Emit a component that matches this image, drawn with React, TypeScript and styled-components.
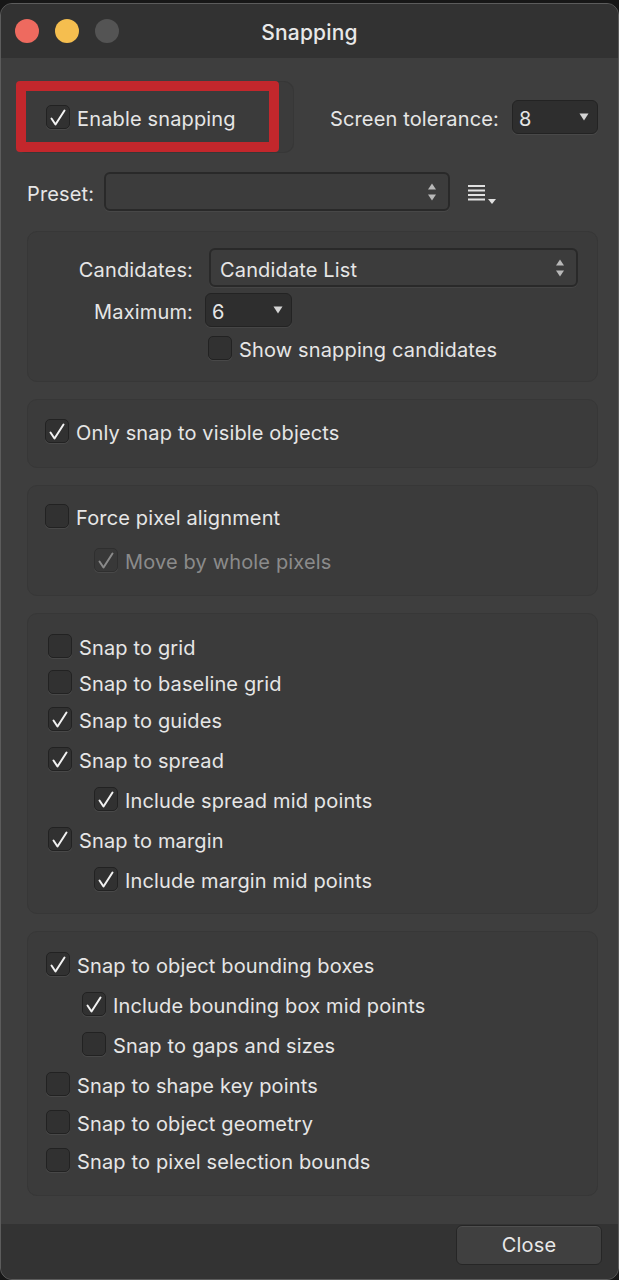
import React from 'react';
import styled, { createGlobalStyle } from 'styled-components';

const GlobalStyle = createGlobalStyle`
  html, body {
    margin: 0;
    padding: 0;
    background: #171717;
  }
  body {
    font-family: Inter, "Noto Sans", "Liberation Sans", sans-serif;
    -webkit-font-smoothing: antialiased;
  }
  * {
    box-sizing: border-box;
  }
`;

type Option = {
  label: string;
  checked?: boolean;
  sub?: boolean;
  space?: number;
};

const spreadOptions: Option[] = [
  { label: 'Snap to grid' },
  { label: 'Snap to baseline grid', space: 10 },
  { label: 'Snap to guides', checked: true, space: 11 },
  { label: 'Snap to spread', checked: true, space: 14 },
  { label: 'Include spread mid points', checked: true, sub: true, space: 14 },
  { label: 'Snap to margin', checked: true, space: 14 },
  { label: 'Include margin mid points', checked: true, sub: true, space: 14 },
];

const objectOptions: Option[] = [
  { label: 'Snap to object bounding boxes', checked: true },
  { label: 'Include bounding box mid points', checked: true, sub: true, space: 14 },
  { label: 'Snap to gaps and sizes', sub: true, space: 14 },
  { label: 'Snap to shape key points', space: 14 },
  { label: 'Snap to object geometry', space: 12 },
  { label: 'Snap to pixel selection bounds', space: 12 },
];

const Checkbox = ({ checked, disabled }: { checked?: boolean; disabled?: boolean }) => (
  <Box $disabled={disabled}>
    {checked && (
      <svg width="22" height="22" viewBox="0 0 22 22">
        <polyline
          points="4.5,12.5 8.5,18.5 17.5,4.5"
          fill="none"
          stroke={disabled ? '#8a8a8a' : '#f2f2f2'}
          strokeWidth="2"
          strokeLinecap="round"
          strokeLinejoin="round"
        />
      </svg>
    )}
  </Box>
);

const StepArrows = () => (
  <svg width="10" height="24" viewBox="0 0 10 24">
    <polygon points="1,9.5 5,3.5 9,9.5" fill="#b8b8b8" />
    <polygon points="1,14.5 5,20.5 9,14.5" fill="#b8b8b8" />
  </svg>
);

const DropArrow = () => (
  <svg width="10" height="8" viewBox="0 0 10 8">
    <polygon points="0.5,0.5 9.5,0.5 5,7.5" fill="#d4d4d4" />
  </svg>
);

const ListMenuIcon = () => (
  <svg width="30" height="24" viewBox="0 0 30 24">
    <rect x="0" y="5" width="17" height="2" fill="#e0e0e0" />
    <rect x="0" y="9.5" width="17" height="2" fill="#e0e0e0" />
    <rect x="0" y="14" width="17" height="2" fill="#e0e0e0" />
    <rect x="0" y="18.5" width="17" height="2" fill="#e0e0e0" />
    <polygon points="20,19 28,19 24,24" fill="#e0e0e0" />
  </svg>
);

const OptionList = ({ options, indent }: { options: Option[]; indent: number }) => (
  <>
    {options.map((o) => (
      <OptionRow key={o.label} $indent={o.sub ? indent : 0} $space={o.space}>
        <Checkbox checked={o.checked} />
        <Label>{o.label}</Label>
      </OptionRow>
    ))}
  </>
);

const App = () => {
  return (
    <>
      <GlobalStyle />
      <Window>
        <TitleBar>
          <Lights>
            <Light $color="#ee6a5f" />
            <Light $color="#f5be4f" />
            <Light $color="#545454" />
          </Lights>
          <Title>Snapping</Title>
          <span />
        </TitleBar>

        <Content>
          <TopRow>
            <EnablePanel>
              <Highlight>
                <OptionRow>
                  <Checkbox checked />
                  <Label>Enable snapping</Label>
                </OptionRow>
              </Highlight>
            </EnablePanel>
            <Tolerance>
              <Label>Screen tolerance:</Label>
              <Dropdown $width={86} $height={34}>
                <Label>8</Label>
                <DropArrow />
              </Dropdown>
            </Tolerance>
          </TopRow>

          <PresetRow>
            <PresetLabel>Preset:</PresetLabel>
            <PopupField $width={346}>
              <Label />
              <StepArrows />
            </PopupField>
            <MenuButton>
              <ListMenuIcon />
            </MenuButton>
          </PresetRow>

          <PanelStack>
            <Panel $pad="16px 0 20px 0">
              <FieldRow>
                <FieldLabel>Candidates:</FieldLabel>
                <PopupField $width={369} $gap={16}>
                  <Label>Candidate List</Label>
                  <StepArrows />
                </PopupField>
              </FieldRow>
              <FieldRow $space={6}>
                <FieldLabel>Maximum:</FieldLabel>
                <Dropdown $width={87} $height={34} $gap={12}>
                  <Label>6</Label>
                  <DropArrow />
                </Dropdown>
              </FieldRow>
              <OptionRow $indent={180} $space={8}>
                <Checkbox />
                <Label>Show snapping candidates</Label>
              </OptionRow>
            </Panel>

            <Panel $pad="18px 0 23px 17px">
              <OptionRow>
                <Checkbox checked />
                <Label>Only snap to visible objects</Label>
              </OptionRow>
            </Panel>

            <Panel $pad="17px 0 22px 17px">
              <OptionRow>
                <Checkbox />
                <Label>Force pixel alignment</Label>
              </OptionRow>
              <OptionRow $indent={49} $space={18}>
                <Checkbox checked disabled />
                <Label $dim>Move by whole pixels</Label>
              </OptionRow>
            </Panel>

            <Panel $pad="19px 0 21px 20px">
              <OptionList options={spreadOptions} indent={46} />
            </Panel>

            <Panel $pad="19px 0 22px 18px">
              <OptionList options={objectOptions} indent={36} />
            </Panel>
          </PanelStack>
        </Content>

        <Footer>
          <CloseButton>Close</CloseButton>
        </Footer>
      </Window>
    </>
  );
};

const Window = styled.div`
  margin-top: 3px;
  width: 619px;
  height: 1277px;
  border: 1px solid #5c5c5c;
  border-radius: 12px;
  overflow: hidden;
  display: flex;
  flex-direction: column;
  background: #3e3e3e;
  color: #e6e6e6;
`;

const TitleBar = styled.header`
  height: 54px;
  flex-shrink: 0;
  background: #323232;
  display: grid;
  grid-template-columns: 1fr auto 1fr;
  align-items: center;
  padding-left: 14px;
`;

const Lights = styled.div`
  display: flex;
  gap: 16px;
`;

const Light = styled.span<{ $color: string }>`
  width: 24px;
  height: 24px;
  border-radius: 50%;
  background: ${(p) => p.$color};
`;

const Title = styled.h1`
  margin: 2px 0 0 -14px;
  font-size: 21px;
  font-weight: 500;
  letter-spacing: 0.2px;
  color: #e8e8e8;
`;

const Content = styled.main`
  height: 1166px;
  flex-shrink: 0;
  padding: 23px 20px 0 15px;
  display: flex;
  flex-direction: column;
`;

const TopRow = styled.div`
  display: flex;
  align-items: center;
  justify-content: space-between;
`;

const EnablePanel = styled.div`
  width: 278px;
  height: 72px;
  border-radius: 10px;
  background: #3b3b3b;
  box-shadow: inset 0 0 0 1px #373737;
`;

const Highlight = styled.div`
  width: 263px;
  height: 71px;
  border: 10px solid #c3272c;
  border-radius: 4px;
  padding-left: 20px;
  display: flex;
  align-items: center;
`;

const Tolerance = styled.div`
  display: flex;
  align-items: center;
  gap: 13px;
`;

const Label = styled.span<{ $dim?: boolean }>`
  font-size: 20px;
  line-height: 26px;
  padding-top: 4px;
  letter-spacing: 0.15px;
  white-space: nowrap;
  color: ${(p) => (p.$dim ? '#8b8b8b' : '#e6e6e6')};
`;

const Dropdown = styled.div<{ $width: number; $height: number; $gap?: number }>`
  width: ${(p) => p.$width}px;
  height: ${(p) => p.$height}px;
  margin-left: ${(p) => p.$gap ?? 0}px;
  padding: 0 8px 0 6px;
  display: flex;
  align-items: center;
  justify-content: space-between;
  background: #2e2e2e;
  border: 1px solid #232323;
  border-radius: 6px;
  box-shadow: 0 1px 0 rgba(255, 255, 255, 0.06);
`;

const PopupField = styled.div<{ $width: number; $gap?: number }>`
  width: ${(p) => p.$width}px;
  height: 39px;
  margin-left: ${(p) => p.$gap ?? 0}px;
  padding: 0 11px 0 9px;
  display: flex;
  align-items: center;
  justify-content: space-between;
  background: #3c3c3c;
  border: 2px solid #292929;
  border-radius: 6px;
  box-shadow: 0 1px 0 rgba(255, 255, 255, 0.05);
`;

const PresetRow = styled.div`
  margin: 19px 0 0 11px;
  display: flex;
  align-items: center;
`;

const PresetLabel = styled(Label)`
  width: 77px;
`;

const MenuButton = styled.span`
  display: flex;
  margin-left: 18px;
`;

const PanelStack = styled.div`
  margin-top: 20px;
  display: flex;
  flex-direction: column;
  gap: 17px;
`;

const Panel = styled.section<{ $pad: string }>`
  margin-left: 11px;
  padding: ${(p) => p.$pad};
  display: flex;
  flex-direction: column;
  background: #3b3b3b;
  border: 1px solid #373737;
  border-radius: 10px;
`;

const FieldRow = styled.div<{ $space?: number }>`
  display: flex;
  align-items: center;
  margin-top: ${(p) => p.$space ?? 0}px;
`;

const FieldLabel = styled(Label)`
  width: 165px;
  text-align: right;
`;

const OptionRow = styled.div<{ $indent?: number; $space?: number }>`
  height: 26px;
  display: flex;
  align-items: center;
  gap: 7px;
  margin-left: ${(p) => p.$indent ?? 0}px;
  margin-top: ${(p) => p.$space ?? 0}px;
`;

const Box = styled.span<{ $disabled?: boolean }>`
  width: 24px;
  height: 24px;
  flex-shrink: 0;
  display: flex;
  align-items: center;
  justify-content: center;
  border-radius: 5px;
  background: ${(p) => (p.$disabled ? '#383838' : '#313131')};
  border: 1px solid ${(p) => (p.$disabled ? '#2f2f2f' : '#222222')};
  box-shadow: 0 1px 0 rgba(255, 255, 255, 0.07);
`;

const Footer = styled.footer`
  flex: 1;
  background: #333333;
  display: flex;
  justify-content: flex-end;
  align-items: flex-start;
  padding: 1px 16px 0 0;
`;

const CloseButton = styled.button`
  width: 146px;
  height: 40px;
  font-family: inherit;
  font-size: 20px;
  letter-spacing: 0.15px;
  color: #e8e8e8;
  background: #404040;
  border: 1px solid #262626;
  border-radius: 6px;
  box-shadow: inset 0 1px 0 rgba(255, 255, 255, 0.08);
`;

export default App;
